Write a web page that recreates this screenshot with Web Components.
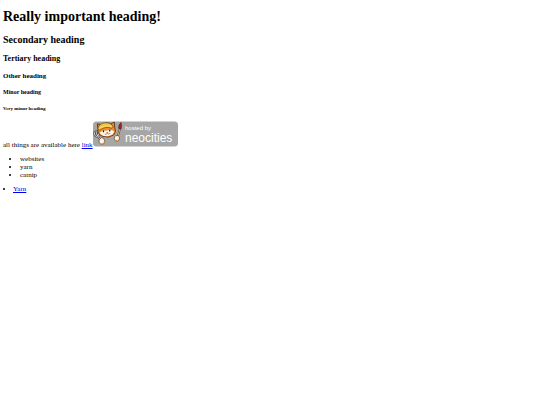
<!DOCTYPE html>
<html lang="en">
<head>
<meta charset="utf-8">
<meta name="viewport" content="width=device-width, initial-scale=1">
<title>Really important heading!</title>
<style>
  body {
    margin: 0;
    background: #fff;
    color: #000;
    font: 7px/8px "Liberation Serif", "Times New Roman", serif;
  }
</style>
</head>
<body>
<cat-page>
  <page-headings slot="headings"></page-headings>
  <link-line slot="intro" href="#link" label="link">all things are available here</link-line>
  <thing-list slot="things" items="websites,yarn,catnip"></thing-list>
  <yarn-item slot="extra" href="#yarn">Yarn</yarn-item>
</cat-page>

<script>
class CatPage extends HTMLElement {
  constructor() {
    super();
    this.attachShadow({ mode: "open" }).innerHTML = `
      <style>
        :host {
          display: block;
          padding: 8px 3px;
        }
        main {
          display: flex;
          flex-direction: column;
        }
      </style>
      <main>
        <slot name="headings"></slot>
        <slot name="intro"></slot>
        <slot name="things"></slot>
        <slot name="extra"></slot>
      </main>
    `;
  }
}

class PageHeadings extends HTMLElement {
  constructor() {
    super();
    this.attachShadow({ mode: "open" }).innerHTML = `
      <style>
        :host {
          display: flex;
          flex-direction: column;
          gap: 8px;
        }
        h1, h2, h3, h4, h5, h6 {
          margin: 0;
          font-weight: bold;
        }
        h1 { font-size: 14px; line-height: 17px; }
        h2 { font-size: 10px; line-height: 13px; }
        h3 { font-size: 8px; line-height: 10px; }
        h4 { font-size: 7px; line-height: 8px; }
        h5 { font-size: 6px; line-height: 9px; }
        h6 { font-size: 5px; line-height: 8px; }
      </style>
      <h1>Really important heading!</h1>
      <h2>Secondary heading</h2>
      <h3>Tertiary heading</h3>
      <h4>Other heading</h4>
      <h5>Minor heading</h5>
      <h6>Very minor heading</h6>
    `;
  }
}

class NeocitiesBadge extends HTMLElement {
  constructor() {
    super();
    this.attachShadow({ mode: "open" }).innerHTML = `
      <style>
        :host {
          display: inline-block;
        }
        svg {
          display: block;
          width: 85px;
          height: 26px;
        }
        text {
          fill: #fff;
          font-family: "Liberation Sans", Arial, sans-serif;
        }
        .small { font-size: 6px; }
        .big { font-size: 12px; }
      </style>
      <svg viewBox="0 0 85 26" role="img" aria-label="hosted by neocities">
        <rect y="0.5" width="85" height="25" rx="3.5" fill="#a6a6a6"/>
        <!-- fork -->
        <g fill="none" stroke-linecap="round" stroke-linejoin="round">
          <path d="M4.5 14.5L9 21.5M1.2 11.2L1.8 14.4Q3.6 16.6 5.4 14.4Q6.4 13 5 9.8M2.9 10.2L4.1 14.2" stroke="#444" stroke-width="2"/>
          <path d="M4.5 14.5L9 21.5M1.2 11.2L1.8 14.4Q3.6 16.6 5.4 14.4Q6.4 13 5 9.8M2.9 10.2L4.1 14.2" stroke="#eee" stroke-width="0.8"/>
        </g>
        <!-- brush -->
        <path d="M27 7.5L24.5 16.5" stroke="#432" stroke-width="1.8"/>
        <path d="M27 7.5L24.5 16.5" stroke="#e8c08a" stroke-width="0.9"/>
        <path d="M25.7 7.5Q25.2 4 28 1.4Q29.2 5.2 28 8Z" fill="#a52828" stroke="#43201c" stroke-width="0.6"/>
        <!-- head -->
        <path d="M5 8L4.3 2.8L9 3.8Q14 .6 17.8 2.7L21.4 1.2L21.7 6.2Q23.8 11 20.6 14Q15.7 17.6 9.2 15.2Q4.1 13 5 8Z" fill="#ee8c2a" stroke="#4a2a16" stroke-width="0.8"/>
        <path d="M6.9 11.5Q10.2 8.5 12.9 9.8L14.8 9.2Q18 7.8 21.2 10.5Q20.8 13.1 18 14.2Q13 16.3 8.6 14Q7 13.1 6.9 11.5Z" fill="#fff4e6"/>
        <path d="M4.7 7.9Q5.8 2.2 12.2 1.7Q18.2 1.2 20.3 6L19 7.3Q12.4 4.8 6.8 9.2Z" fill="#efc143" stroke="#694215" stroke-width="0.7"/>
        <path d="M7.2 6.6Q12.2 3.4 18.6 5.5" fill="none" stroke="#fff0a0" stroke-width="0.6"/>
        <ellipse cx="10.5" cy="10.3" rx="0.7" ry="1.1" fill="#25150e"/>
        <ellipse cx="16.8" cy="9.6" rx="0.7" ry="1.1" fill="#25150e"/>
        <path d="M13.2 11.1L15 10.9L14.2 12Z" fill="#8c3327"/>
        <path d="M11.8 13Q13.4 14.2 14.2 12.2Q15.7 13.8 17.2 12.3" fill="none" stroke="#5c3420" stroke-width="0.5"/>
        <!-- paws -->
        <path d="M6.8 17.8Q8.5 15.7 10.8 17.4Q12.9 20.6 10.6 23Q7.4 24.4 6.2 21.4Q5.8 19.2 6.8 17.8Z" fill="#fff4e2" stroke="#653b1d" stroke-width="0.7"/>
        <path d="M22.5 14.7Q25.1 13.7 26.5 16Q27.1 19.1 24.7 20.3Q22 20.4 21.2 17.8Q21.2 15.6 22.5 14.7Z" fill="#fff4e2" stroke="#653b1d" stroke-width="0.7"/>
        <path d="M7 22.5Q9.4 24.2 11.2 21.8M22.2 19.3Q24.6 20.8 26.2 18.4" fill="none" stroke="#e18a32" stroke-width="0.9"/>
        <text class="small" x="32" y="9">hosted by</text>
        <text class="big" x="32" y="21">neocities</text>
      </svg>
    `;
  }
}

class LinkLine extends HTMLElement {
  constructor() {
    super();
    this.attachShadow({ mode: "open" });
  }

  connectedCallback() {
    this.shadowRoot.innerHTML = `
      <style>
        :host {
          display: flex;
          align-items: last baseline;
          margin-top: 8px;
        }
        a { color: #0000ee; }
      </style>
      <span><slot></slot> <a href="${this.getAttribute("href")}">${this.getAttribute("label")}</a></span>
      <neocities-badge></neocities-badge>
    `;
  }
}

class ThingList extends HTMLElement {
  constructor() {
    super();
    this.attachShadow({ mode: "open" });
  }

  connectedCallback() {
    const items = this.getAttribute("items").split(",");
    this.shadowRoot.innerHTML = `
      <style>
        :host {
          display: block;
          margin-top: 6px;
        }
        ul {
          margin: 0;
          padding-left: 17px;
        }
      </style>
      <ul>${items.map((item) => `<li>${item}</li>`).join("")}</ul>
    `;
  }
}

class YarnItem extends HTMLElement {
  constructor() {
    super();
    this.attachShadow({ mode: "open" });
  }

  connectedCallback() {
    this.shadowRoot.innerHTML = `
      <style>
        :host {
          display: block;
          margin-top: 6px;
        }
        ul {
          margin: 0;
          padding: 0;
          list-style-position: inside;
        }
        a { color: #0000ee; }
      </style>
      <ul><li><a href="${this.getAttribute("href")}"><slot></slot></a></li></ul>
    `;
  }
}

customElements.define("cat-page", CatPage);
customElements.define("page-headings", PageHeadings);
customElements.define("neocities-badge", NeocitiesBadge);
customElements.define("link-line", LinkLine);
customElements.define("thing-list", ThingList);
customElements.define("yarn-item", YarnItem);
</script>
</body>
</html>
